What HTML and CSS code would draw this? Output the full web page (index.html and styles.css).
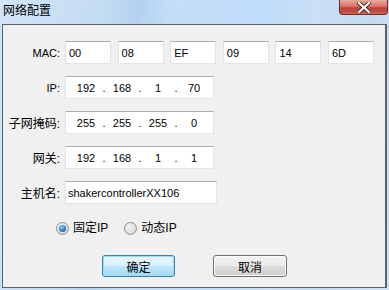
FILE: index.html
```html
<!DOCTYPE html>
<html>
<head>
  <title>网络配置</title>
  <link rel="stylesheet" href="styles.css">
</head>
<body>

  <div class="window">
    <div class="titlebar">
      <span class="title">网络配置</span>
      <div class="close-btn">
        <svg width="14" height="11" viewBox="0 0 14 11">
          <path d="M2 1 L12 10 M12 1 L2 10" stroke="#4a2a26" stroke-width="4" stroke-linecap="square"/>
          <path d="M2 1 L12 10 M12 1 L2 10" stroke="#ffffff" stroke-width="2.2" stroke-linecap="square"/>
        </svg>
      </div>
    </div>

    <div class="client">
      <div class="row">
        <div class="label latin">MAC:</div>
        <div class="mac-list">
          <div class="field mac">00</div>
          <div class="field mac">08</div>
          <div class="field mac">EF</div>
          <div class="field mac">09</div>
          <div class="field mac">14</div>
          <div class="field mac">6D</div>
        </div>
      </div>

      <div class="row">
        <div class="label latin">IP:</div>
        <div class="field ip">
          <span class="seg">192</span><span class="dot">.</span><span class="seg">168</span><span class="dot">.</span><span class="seg">1</span><span class="dot">.</span><span class="seg">70</span>
        </div>
      </div>

      <div class="row">
        <div class="label">子网掩码:</div>
        <div class="field ip">
          <span class="seg">255</span><span class="dot">.</span><span class="seg">255</span><span class="dot">.</span><span class="seg">255</span><span class="dot">.</span><span class="seg">0</span>
        </div>
      </div>

      <div class="row">
        <div class="label">网关:</div>
        <div class="field ip">
          <span class="seg">192</span><span class="dot">.</span><span class="seg">168</span><span class="dot">.</span><span class="seg">1</span><span class="dot">.</span><span class="seg">1</span>
        </div>
      </div>

      <div class="row">
        <div class="label">主机名:</div>
        <div class="field host">shakercontrollerXX106</div>
      </div>

      <div class="radios">
        <label class="radio"><span class="circle checked"></span>固定IP</label>
        <label class="radio"><span class="circle"></span>动态IP</label>
      </div>

      <div class="buttons">
        <button class="btn default">确定</button>
        <button class="btn">取消</button>
      </div>
    </div>
  </div>

</body>
</html>
```

FILE: styles.css
```css
body {
  margin: 0;
  font-family: 'Liberation Sans', 'Noto Sans CJK SC', sans-serif;
  font-size: 12px;
  color: #000;
}

.window {
  width: 389px;
  height: 290px;
  display: flex;
  flex-direction: column;
  padding: 0 2px 2px 2px;
  box-sizing: border-box;
  background: linear-gradient(100deg, #d3e5f7 0%, #c2dbf3 25%, #b4d2ef 32%, #c4def8 40%, #bfdcf9 60%, #c9e0f5 72%, #c3dbf2 85%, #d1e4f6 100%);
}

.titlebar {
  height: 24px;
  display: flex;
  align-items: flex-start;
  flex-shrink: 0;
}

.title {
  margin-top: 3px;
  margin-left: 1px;
  font-family: 'Noto Sans CJK SC', sans-serif;
  font-size: 12px;
  line-height: 14px;
  color: #000;
}

.close-btn {
  margin-left: auto;
  margin-right: -1px;
  width: 47px;
  height: 14px;
  border: 1px solid #6e2f2a;
  border-top: none;
  border-radius: 0 0 4px 4px;
  background: linear-gradient(#e9a99c 0%, #d8766b 45%, #c2443a 55%, #c24a3f 85%, #d36b5d 100%);
  display: flex;
  align-items: center;
  justify-content: center;
}

.client {
  flex: 1;
  background: #f0f0f0;
  border: 1px solid #59636d;
  border-right-width: 2px;
  padding: 16px 0 0 0;
  display: flex;
  flex-direction: column;
}

.row {
  display: flex;
  align-items: center;
  height: 23px;
  margin-bottom: 12px;
}

.label {
  width: 57px;
  text-align: right;
  margin-right: 5px;
  font-size: 12px;
  white-space: nowrap;
}

.label.latin {
  font-size: 11px;
}

.mac-list {
  display: flex;
  gap: 6.6px;
}

.field {
  height: 23px;
  box-sizing: border-box;
  background: #fff;
  border: 1px solid #e2e3ea;
  border-top-color: #abadb3;
  font-size: 11px;
  display: flex;
  align-items: center;
}

.mac {
  width: 46px;
  padding-left: 3px;
}

.ip {
  width: 149px;
  padding-left: 6px;
}

.seg {
  width: 28px;
  text-align: center;
}

.dot {
  width: 8px;
  text-align: center;
}

.host {
  width: 152px;
  padding-left: 2px;
}

.radios {
  display: flex;
  margin-top: 5px;
  padding-left: 53px;
  gap: 16px;
}

.radio {
  display: flex;
  align-items: center;
  font-size: 12px;
  line-height: 14px;
}

.circle {
  width: 11px;
  height: 11px;
  border-radius: 50%;
  border: 1px solid #8e8f8f;
  background: radial-gradient(circle at 40% 35%, #f4f4f4 0%, #dcdcdc 70%);
  margin-right: 4px;
  position: relative;
}

.circle.checked::after {
  content: "";
  position: absolute;
  left: 2px;
  top: 2px;
  width: 7px;
  height: 7px;
  border-radius: 50%;
  background: radial-gradient(circle at 40% 35%, #8fd3f7 0%, #2b83c7 50%, #0f4f93 100%);
}

.buttons {
  display: flex;
  margin-top: 20px;
  padding-left: 99px;
  gap: 38px;
}

.btn {
  width: 74px;
  height: 22px;
  border: 1px solid #707070;
  border-radius: 3px;
  background: linear-gradient(#f2f2f2 0%, #ebebeb 50%, #dddddd 51%, #cfcfcf 100%);
  font-family: 'Noto Sans CJK SC', sans-serif;
  font-size: 12px;
  color: #000;
  padding: 0;
  box-shadow: inset 0 0 0 1px #fcfcfc;
}

.btn.default {
  width: 73px;
  border-color: #3c7fb1;
  background: linear-gradient(#eaf6fd 0%, #d9f0fc 50%, #bee6fd 51%, #a7d9f5 100%);
  box-shadow: inset 0 0 0 1px #9bdcf8;
}
```
